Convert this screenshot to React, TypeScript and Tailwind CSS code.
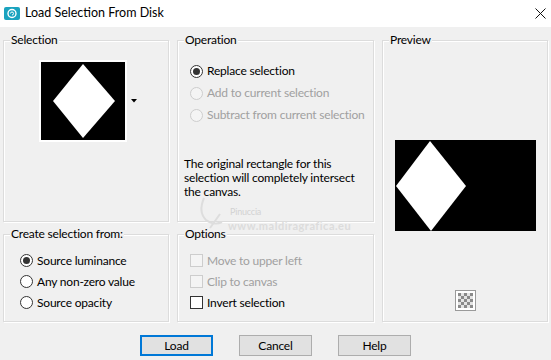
import React from "react";

const Radio = ({ checked, disabled }: { checked?: boolean; disabled?: boolean }) => (
  <span
    className={`w-[13px] h-[13px] shrink-0 rounded-full border flex items-center justify-center ${
      disabled ? "border-[#cdcdcd] bg-[#f4f4f4]" : "border-[#333333] bg-white"
    }`}
  >
    {checked && <span className="w-[7px] h-[7px] rounded-full bg-[#333333]" />}
  </span>
);

const Check = ({ disabled }: { disabled?: boolean }) => (
  <span
    className={`w-[13px] h-[13px] shrink-0 border ${
      disabled ? "border-[#cdcdcd] bg-[#f4f4f4]" : "border-[#333333] bg-white"
    }`}
  />
);

const Group = ({
  title,
  className,
  children,
}: {
  title: string;
  className?: string;
  children?: React.ReactNode;
}) => (
  <fieldset
    className={`border border-[#dcdcdc] shadow-[inset_1px_1px_0_#ffffff,1px_1px_0_#ffffff] min-w-0 ${className || ""}`}
  >
    <legend className="ml-[6px] px-px leading-[16px] bg-[#f0f0f0]">{title}</legend>
    {children}
  </fieldset>
);

const Option = ({
  label,
  checked,
  disabled,
  box,
}: {
  label: string;
  checked?: boolean;
  disabled?: boolean;
  box?: boolean;
}) => (
  <div className="flex items-center h-[21px] gap-[4px]">
    {box ? <Check disabled={disabled} /> : <Radio checked={checked} disabled={disabled} />}
    <span className={disabled ? "text-[#a0a0a0]" : "text-black"}>{label}</span>
  </div>
);

const Button = ({ label, primary }: { label: string; primary?: boolean }) => (
  <button
    className={`w-[73px] h-[21px] bg-[#e1e1e1] leading-none ${
      primary ? "border-2 border-[#0078d7]" : "border border-[#adadad]"
    }`}
  >
    {label}
  </button>
);

const App = () => {
  return (
    <div className="w-[551px] h-[360px] bg-[#f0f0f0] text-[12px] tracking-[-0.2px] text-black font-['Lato',sans-serif] relative overflow-hidden">
      {/* Title bar */}
      <div className="h-[27px] bg-white flex items-center">
        <svg width="16" height="13" viewBox="0 0 16 13" className="ml-[4px]">
          <rect x="0" y="0" width="16" height="13" rx="2" fill="#1aa3bf" />
          <circle cx="8" cy="6.5" r="4" fill="none" stroke="#ffffff" strokeWidth="1.4" />
          <path d="M6.5 6.5 a1.5 1.5 0 1 1 1.5 1.5" fill="none" stroke="#ffffff" strokeWidth="1" />
        </svg>
        <span className="ml-[5px] leading-none text-[12.5px] tracking-normal">Load Selection From Disk</span>
        <svg width="11" height="11" viewBox="0 0 11 11" className="ml-auto mr-[5px]">
          <path d="M0.5 0.5 L10.5 10.5 M10.5 0.5 L0.5 10.5" stroke="#111111" strokeWidth="1" />
        </svg>
      </div>

      {/* Groups */}
      <div className="grid grid-cols-[166px_197px_166px] grid-rows-[190px_96px] gap-x-[8px] gap-y-[4px] pl-[3px] pt-[5px]">
        <Group title="Selection">
          <div className="flex items-center pl-[35px] pt-[12px]">
            <svg width="88" height="82" viewBox="0 0 88 82">
              <rect x="0" y="0" width="88" height="82" fill="#ffffff" />
              <rect x="2" y="2" width="84" height="78" fill="#000000" />
              <polygon points="44,4 14,41 44,78 76,41" fill="#ffffff" />
            </svg>
            <svg width="6" height="4" viewBox="0 0 6 4" className="ml-[4px]">
              <polygon points="0,0 6,0 3,3.5" fill="#000000" />
            </svg>
          </div>
        </Group>

        <Group title="Operation">
          <div className="pl-[12px] pt-[12px]">
            <div className="flex items-center h-[22px] gap-[4px]">
              <Radio checked />
              <span>Replace selection</span>
            </div>
            <div className="flex items-center h-[22px] gap-[4px]">
              <Radio disabled />
              <span className="text-[#a0a0a0]">Add to current selection</span>
            </div>
            <div className="flex items-center h-[22px] gap-[4px] whitespace-nowrap">
              <Radio disabled />
              <span className="text-[#a0a0a0]">Subtract from current selection</span>
            </div>
          </div>
          <p className="pl-[6px] mt-[31px] leading-[14px] whitespace-nowrap">
            The original rectangle for this
            <br />
            selection will completely intersect
            <br />
            the canvas.
          </p>
        </Group>

        <Group title="Preview" className="row-span-2">
          <div className="flex flex-col items-center pt-[92px]">
            <svg width="141" height="91" viewBox="0 0 141 91">
              <rect x="0" y="0" width="141" height="91" fill="#000000" />
              <polygon points="35,1 1,46 36,91 71,46" fill="#ffffff" />
            </svg>
            <div className="mt-[59px] w-[21px] h-[21px] border border-[#9a9a9a] bg-white flex items-center justify-center">
              <svg width="15" height="15" viewBox="0 0 15 15">
                <rect width="15" height="15" fill="#e4e4e4" />
                {[0, 1, 2, 3, 4].map((r) =>
                  [0, 1, 2, 3, 4].map((c) =>
                    (r + c) % 2 === 0 ? (
                      <rect key={`${r}-${c}`} x={c * 3} y={r * 3} width="3" height="3" fill="#8a8a8a" />
                    ) : null
                  )
                )}
              </svg>
            </div>
          </div>
        </Group>

        <Group title="Create selection from:">
          <div className="pl-[16px] pt-[8px]">
            <Option label="Source luminance" checked />
            <Option label="Any non-zero value" />
            <Option label="Source opacity" />
          </div>
        </Group>

        <Group title="Options">
          <div className="pl-[12px] pt-[8px]">
            <Option label="Move to upper left" box disabled />
            <Option label="Clip to canvas" box disabled />
            <Option label="Invert selection" box />
          </div>
        </Group>
      </div>

      {/* Buttons */}
      <div className="flex justify-center gap-[26px] mt-[13px]">
        <Button label="Load" primary />
        <Button label="Cancel" />
        <Button label="Help" />
      </div>

      {/* Watermark */}
      <div className="absolute left-[196px] top-[194px] pointer-events-none select-none">
        <svg width="30" height="40" viewBox="0 0 30 40" className="absolute left-0 top-0">
          <path d="M8 4 Q2 18 10 26 Q18 32 26 28" fill="none" stroke="#dddddd" strokeWidth="2" />
          <path d="M14 34 L24 20" stroke="#dddddd" strokeWidth="2" />
        </svg>
        <div className="absolute left-[34px] top-[13px] text-[9px] leading-none text-[#d2d2d2] whitespace-nowrap">
          Pinuccia
        </div>
        <div className="absolute left-[32px] top-[26px] text-[11px] font-bold leading-none text-[#dcdcdc] whitespace-nowrap tracking-[0.5px]">
          www.maldiragrafica.eu
        </div>
      </div>
    </div>
  );
};

export default App;
